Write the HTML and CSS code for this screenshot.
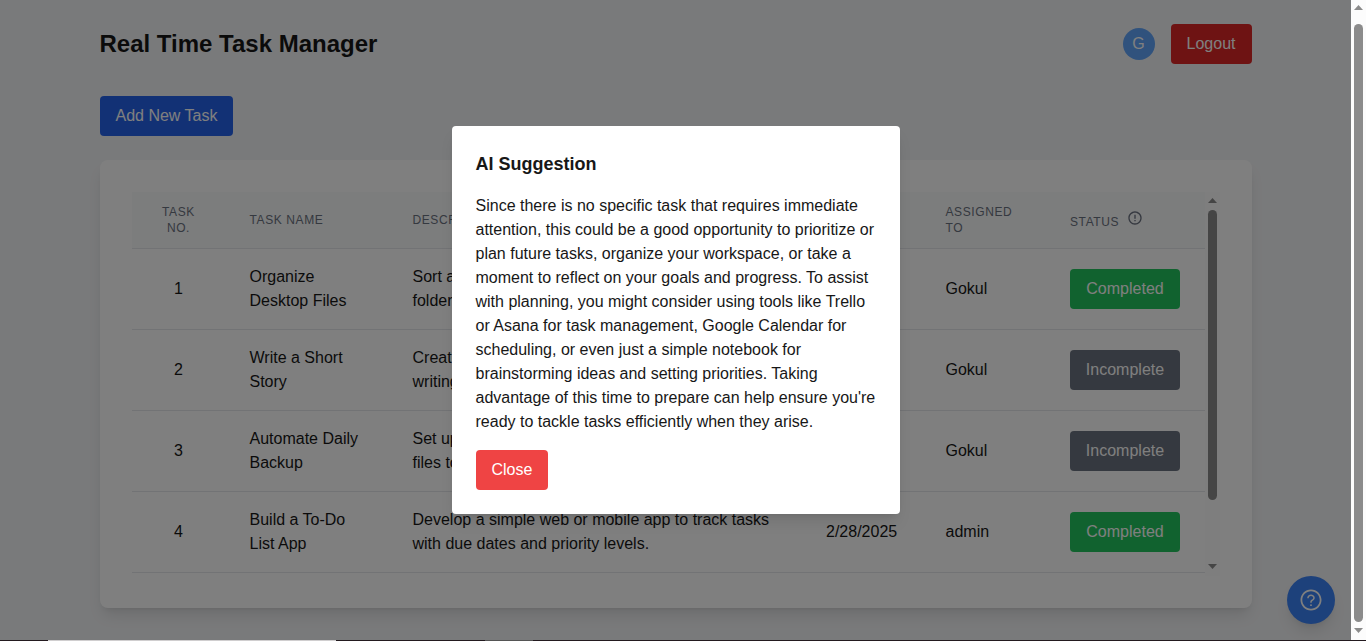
FILE: index.html
```
<!DOCTYPE html>
<html lang="en">
<head>
<meta charset="utf-8">
<title>Real Time Task Manager</title>
<link rel="stylesheet" href="styles.css">
</head>
<body>
<div class="window">
  <div class="viewport">
    <main class="container">
      <header class="header">
        <h1 class="title">Real Time Task Manager</h1>
        <div class="user">
          <span class="avatar">G</span>
          <button class="btn btn-logout">Logout</button>
        </div>
      </header>
      <div class="toolbar"><button class="btn btn-add">Add New Task</button></div>
      <section class="card">
        <div class="scroller">
          <table class="tasks">
            <colgroup><col class="c-no"><col class="c-name"><col class="c-desc"><col class="c-date"><col class="c-who"><col class="c-status"></colgroup>
            <thead>
              <tr><th class="center">Task No.</th><th>Task Name</th><th>Description</th><th>Deadline</th><th>Assigned To</th>
              <th>Status<svg class="info" viewBox="0 0 24 24"><path d="M11 15h2v2h-2zm0-8h2v6h-2zm.99-5C6.47 2 2 6.48 2 12s4.47 10 9.99 10C17.52 22 22 17.52 22 12S17.52 2 11.99 2zM12 20c-4.42 0-8-3.58-8-8s3.58-8 8-8 8 3.58 8 8-3.58 8-8 8z"/></svg></th></tr>
            </thead>
            <tbody>
              <tr><td class="center">1</td><td>Organize Desktop Files</td><td>Sort and<br>folders</td><td></td><td>Gokul</td><td><button class="btn status done">Completed</button></td></tr>
              <tr><td class="center">2</td><td>Write a Short Story</td><td>Create a<br>writing</td><td></td><td>Gokul</td><td><button class="btn status">Incomplete</button></td></tr>
              <tr><td class="center">3</td><td>Automate Daily Backup</td><td>Set up a<br>files to</td><td></td><td>Gokul</td><td><button class="btn status">Incomplete</button></td></tr>
              <tr><td class="center">4</td><td>Build a To-Do List App</td><td>Develop a simple web or mobile app to track tasks with due dates and priority levels.</td><td>2/28/2025</td><td>admin</td><td><button class="btn status done">Completed</button></td></tr>
            </tbody>
          </table>
          <div class="bar bar-inner">
            <svg class="arrow" viewBox="0 0 9 5"><path d="M0 5L4.5 0L9 5z"/></svg>
            <div class="thumb"></div>
            <svg class="arrow" viewBox="0 0 9 5"><path d="M0 0H9L4.5 5z"/></svg>
          </div>
        </div>
      </section>
    </main>
    <button class="fab" aria-label="Help"><svg viewBox="0 0 1024 1024"><path d="M512 64C264.6 64 64 264.6 64 512s200.6 448 448 448 448-200.6 448-448S759.4 64 512 64zm0 820c-205.4 0-372-166.6-372-372s166.6-372 372-372 372 166.6 372 372-166.6 372-372 372z"/><path d="M623.6 316.7C593.6 290.4 554 276 512 276s-81.6 14.5-111.6 40.7C369.2 344 352 380.7 352 420v7.6c0 4.4 3.6 8 8 8h48c4.4 0 8-3.6 8-8V420c0-44.1 43.1-80 96-80s96 35.9 96 80c0 31.1-22 59.6-56.1 72.7-21.2 8.1-39.2 22.3-52.1 40.9-13.1 19-19.9 41.8-19.9 64.9V620c0 4.4 3.6 8 8 8h48c4.4 0 8-3.6 8-8v-22.7a48.3 48.3 0 0 1 30.9-44.8c59-22.7 97.1-74.7 97.1-132.5.1-39.3-17.1-76-48.3-103.3zM472 732a40 40 0 1 0 80 0 40 40 0 1 0-80 0z"/></svg></button>
    <div class="overlay">
      <div class="modal">
        <h2 class="modal-title">AI Suggestion</h2>
        <p class="modal-text">Since there is no specific task that requires immediate attention, this could be a good opportunity to prioritize or plan future tasks, organize your workspace, or take a moment to reflect on your goals and progress. To assist with planning, you might consider using tools like Trello or Asana for task management, Google Calendar for scheduling, or even just a simple notebook for brainstorming ideas and setting priorities. Taking advantage of this time to prepare can help ensure you're ready to tackle tasks efficiently when they arise.</p>
        <button class="btn btn-close">Close</button>
      </div>
    </div>
  </div>
  <div class="bar bar-page">
    <svg class="arrow" viewBox="0 0 9 5"><path d="M0 5L4.5 0L9 5z"/></svg>
    <div class="thumb"></div>
    <svg class="arrow" viewBox="0 0 9 5"><path d="M0 0H9L4.5 5z"/></svg>
  </div>
</div>
<div class="edge"></div>
</body>
</html>
```
FILE: styles.css
```
* { box-sizing: border-box; }
body {
  margin: 0;
  height: 641px;
  overflow: hidden;
  font-family: "Liberation Sans", Arial, sans-serif;
  font-size: 16px;
  line-height: 24px;
  color: #171717;
}
h1, h2, p { margin: 0; }
.window { display: flex; height: 640px; }
.viewport {
  position: relative;
  width: 1351px;
  height: 640px;
  overflow: hidden;
  background: #f3f4f6;
}
.container { width: 1152px; margin: 0 auto; padding-top: 24px; }
.header { display: flex; justify-content: space-between; align-items: center; height: 40px; }
.title { font-size: 24px; line-height: 32px; font-weight: 700; }
.user { display: flex; align-items: center; gap: 16px; }
.avatar {
  width: 32px;
  height: 32px;
  border-radius: 50%;
  background: #60a5fa;
  color: #fff;
  line-height: 32px;
  text-align: center;
}
.btn {
  display: block;
  height: 40px;
  padding: 8px 16px;
  border: 0;
  border-radius: 4px;
  font: 500 16px/24px "Liberation Sans", Arial, sans-serif;
  color: #fff;
  white-space: nowrap;
}
.btn-logout { background: #dc2626; }
.btn-add { background: #2563eb; }
.btn-close { background: #ef4444; }
.toolbar { margin: 32px 0 24px; }
.card {
  height: 448px;
  padding: 32px;
  border-radius: 8px;
  background: #fff;
  box-shadow: 0 10px 15px -3px rgba(0,0,0,.1), 0 4px 6px -4px rgba(0,0,0,.1);
}
.scroller { display: flex; align-items: flex-start; height: 384px; }
.tasks { width: 1073px; flex: none; table-layout: fixed; border-collapse: separate; border-spacing: 0; }
.c-no { width: 94px; }
.c-name { width: 163px; }
.c-desc { width: 413.5px; }
.c-date { width: 119.5px; }
.c-who { width: 124.5px; }
.c-status { width: 158.5px; }
th {
  height: 57px;
  padding: 12px 24px;
  border-bottom: 1px solid #e5e7eb;
  background: #f9fafb;
  color: #6b7280;
  font-size: 12px;
  line-height: 16px;
  font-weight: 500;
  letter-spacing: .6px;
  text-transform: uppercase;
  text-align: left;
}
td { height: 81px; padding: 16px 24px; border-bottom: 1px solid #e5e7eb; }
.center { text-align: center; }
.info { display: inline-block; width: 16px; height: 16px; margin-left: 8px; vertical-align: baseline; fill: currentColor; }
.status { width: 110px; background: #6b7280; padding: 8px 0; }
.done { background: #22c55e; }
.bar {
  display: flex;
  flex-direction: column;
  align-items: center;
  justify-content: space-between;
  width: 15px;
  height: 100%;
  flex: none;
  background: #fcfcfc;
}
.arrow { display: block; width: 9px; height: 5px; fill: #8b8b8b; }
.thumb { width: 9px; border-radius: 5px; background: #8b8b8b; }
.bar-inner { padding: 6px 0 7px; justify-content: flex-start; }
.bar-inner .thumb { height: 290px; margin: 7px 0 64px; }
.bar-page { padding-top: 5px; justify-content: flex-start; }
.bar-page .thumb { height: 598px; margin: 14px 0 6px; }
.fab {
  position: absolute;
  right: 16px;
  bottom: 16px;
  width: 48px;
  height: 48px;
  padding: 12px;
  border: 0;
  border-radius: 50%;
  background: #3b82f6;
  box-shadow: 0 10px 15px -3px rgba(0,0,0,.1), 0 4px 6px -4px rgba(0,0,0,.1);
}
.fab svg { display: block; width: 24px; height: 24px; fill: #fff; }
.overlay {
  position: absolute;
  inset: 0;
  display: flex;
  align-items: center;
  justify-content: center;
  background: rgba(0,0,0,.5);
}
.modal {
  width: 448px;
  padding: 24px;
  border-radius: 4px;
  background: #fff;
  box-shadow: 0 10px 15px -3px rgba(0,0,0,.1), 0 4px 6px -4px rgba(0,0,0,.1);
}
.modal-title { font-size: 18px; line-height: 28px; font-weight: 700; }
.modal-text { margin: 16px 0; }
.edge {
  height: 1px;
  background: linear-gradient(90deg, #231a1f 48px, #d0cecf 48px 336px, #231a1f 336px 485px, #555 485px 533px, #231a1f 533px);
}
```
